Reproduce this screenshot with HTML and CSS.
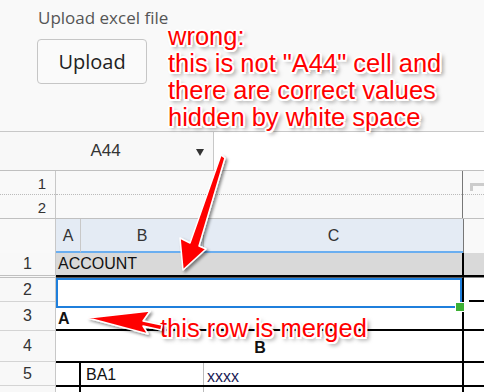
FILE: index.html
```html
<!DOCTYPE html>
<html lang="en">
<head>
    <meta charset="UTF-8">
    <meta name="viewport" content="width=device-width, initial-scale=1.0">
    <title>Upload excel file</title>
    <link rel="stylesheet" href="styles.css">
</head>
<body>
    <div class="top">
        <p class="label">Upload excel file</p>
        <button class="upload">Upload</button>
    </div>

    <div class="namebar">
        <div class="namebox">
            <span class="cell-ref">A44</span>
            <span class="caret"></span>
        </div>
        <div class="formula"></div>
    </div>

    <!-- frozen rows above the sheet -->
    <div class="frozen">
        <div class="frozen-heads">
            <div class="fh">1</div>
            <div class="fh">2</div>
        </div>
        <div class="frozen-body">
            <div class="frow dotted"></div>
            <div class="frow"></div>
        </div>
        <div class="frozen-side"><span class="corner"></span></div>
    </div>

    <div class="colhead">
        <div class="col-corner"></div>
        <div class="col col-a">A</div>
        <div class="col col-b">B</div>
        <div class="col col-c">C</div>
        <div class="col-rest"></div>
    </div>

    <div class="sheet">
        <div class="rowheads">
            <div class="rh rh1">1</div>
            <div class="rh rh2">2</div>
            <div class="rh rh3">3</div>
            <div class="rh rh4">4</div>
            <div class="rh rh5">5</div>
            <div class="rh rh6"></div>
        </div>
        <div class="cells">
            <div class="row r1">
                <div class="main">ACCOUNT</div>
                <div class="ext"></div>
            </div>
            <div class="row r2">
                <div class="main"><div class="selection"><span class="handle"></span></div></div>
                <div class="ext"><span class="ext-line"></span></div>
            </div>
            <div class="row r3">
                <div class="main bold">A</div>
                <div class="ext"></div>
            </div>
            <div class="row r4">
                <div class="main bold center">B</div>
                <div class="ext"></div>
            </div>
            <div class="row r5">
                <div class="main split">
                    <div class="c-a"></div>
                    <div class="c-b">BA1</div>
                    <div class="c-c">xxxx</div>
                </div>
                <div class="ext"></div>
            </div>
            <div class="row r6">
                <div class="main split">
                    <div class="c-a"></div>
                    <div class="c-b"></div>
                    <div class="c-c"></div>
                </div>
                <div class="ext"></div>
            </div>
        </div>
    </div>

    <!-- annotations drawn over the screenshot -->
    <p class="note note-top">wrong:<br>this is not "A44" cell and<br>there are correct values<br>hidden by white space</p>
    <p class="note note-row">this row is merged</p>

    <svg class="arrows" width="484" height="392" viewBox="0 0 484 392">
        <defs>
            <filter id="shade" x="-20%" y="-20%" width="140%" height="140%">
                <feDropShadow dx="2" dy="2" stdDeviation="1.6" flood-color="#000" flood-opacity="0.45"/>
            </filter>
        </defs>
        <path class="arrow" d="M221 155 L225 158 L199 246 L206 249 L183 270 L180 238 L190 243 Z"/>
        <path class="arrow" d="M88 318 L150 311 L143 321 L162 325 L161 330 L143 326 L148 334 Z"/>
    </svg>
</body>
</html>
```

FILE: styles.css
```css
*{
    padding: 0;
    margin: 0;
    box-sizing: border-box;
}
body{
    width: 484px;
    height: 392px;
    overflow: hidden;
    position: relative;
    background: #ffffff;
    font-family: "Liberation Sans", Arial, sans-serif;
    color: #333333;
}
.top{
    height: 132px;
    background: #f9f9f9;
    padding: 6px 0 0 37px;
    border-bottom: 1px solid #c8c8c8;
    font-family: "Open Sans", sans-serif;
}
.label{
    font-size: 17px;
    line-height: 24px;
    color: #555555;
    padding-left: 1px;
}
.upload{
    margin-top: 9px;
    width: 110px;
    height: 45px;
    border: 1px solid #c6c6c6;
    border-radius: 4px;
    background: #fafafa;
    font-family: "Open Sans", sans-serif;
    font-size: 20px;
    color: #222222;
}

/* name box */
.namebar{
    height: 39px;
    display: flex;
    border-bottom: 1px solid #c0c0c0;
}
.namebox{
    width: 214px;
    background: #f8f8f8;
    border-right: 1px solid #c8c8c8;
    display: flex;
    align-items: center;
    justify-content: center;
    position: relative;
}
.cell-ref{
    font-size: 17px;
    color: #333333;
    margin-left: -2px;
}
.caret{
    position: absolute;
    right: 9px;
    top: 17px;
    border-left: 4px solid transparent;
    border-right: 4px solid transparent;
    border-top: 7px solid #333333;
}
.formula{
    flex: 1;
    background: #ffffff;
}

/* frozen rows */
.frozen{
    display: flex;
    height: 48px;
    border-bottom: 1px solid #c0c0c0;
    background: #f9f9f9;
}
.frozen-heads{
    width: 56px;
    border-right: 1px solid #c8c8c8;
}
.fh{
    height: 23px;
    font-size: 15px;
    line-height: 25px;
    text-align: right;
    padding-right: 9px;
    color: #333333;
}
.fh:first-child{
    border-bottom: 1px dotted #bbbbbb;
    height: 24px;
}
.frozen-body{
    width: 407px;
    border-right: 1px solid #777777;
}
.frow{
    height: 23px;
}
.frow.dotted{
    height: 24px;
    border-bottom: 1px dotted #bbbbbb;
}
.frozen-side{
    flex: 1;
    position: relative;
}
.frozen-side::after{
    content: "";
    position: absolute;
    left: 0;
    right: 0;
    top: 23px;
    border-bottom: 1px dotted #bbbbbb;
}
.corner{
    position: absolute;
    left: 7px;
    top: 12px;
    width: 16px;
    height: 8px;
    border-top: 3px solid #cccccc;
    border-left: 3px solid #cccccc;
}

/* column header */
.colhead{
    display: flex;
    height: 34px;
}
.col-corner{
    width: 56px;
    background: #f9f9f9;
    border-right: 1px solid #c8c8c8;
}
.col{
    background: #e4ebf4;
    border-bottom: 2px solid #6aaef0;
    font-size: 16px;
    line-height: 34px;
    text-align: center;
    color: #333333;
}
.col-a{
    width: 25px;
    border-right: 1px solid #c8c8c8;
}
.col-b{
    width: 123px;
    border-right: 1px solid #c8c8c8;
}
.col-c{
    width: 259px;
}
.col-rest{
    flex: 1;
    background: #f9f9f9;
    border-left: 1px solid #777777;
}

/* sheet body */
.sheet{
    display: flex;
}
.rowheads{
    width: 56px;
    background: #f8f8f8;
    border-right: 1px solid #c8c8c8;
}
.rh{
    font-size: 16px;
    text-align: center;
    color: #333333;
    border-bottom: 1px solid #d4d4d4;
    display: flex;
    align-items: center;
    justify-content: center;
}
.rh1{ height: 25px; border-bottom: 3px double #c0c0c0; }
.rh2{ height: 24px; }
.rh3{ height: 29px; }
.rh4{ height: 31px; }
.rh5{ height: 24px; }
.rh6{ height: 20px; border-bottom: none; }

.cells{
    flex: 1;
}
.row{
    display: flex;
}
.main{
    width: 408px;
    border-right: 2px solid #000000;
    font-size: 16px;
    color: #111111;
    padding-left: 2px;
    display: flex;
    align-items: center;
}
.ext{
    flex: 1;
    position: relative;
}
.r1 .main,
.r1 .ext{
    height: 24px;
    background: #d9d9d9;
    border-bottom: 2px solid #000000;
}
.r2 .main{
    height: 31px;
    padding: 0;
    border-top: 1px solid #555555;
}
.r2 .ext{
    border-top: 1px solid #888888;
}
.selection{
    width: 100%;
    height: 100%;
    border: 2px solid #1f7fdc;
    position: relative;
}
.handle{
    position: absolute;
    right: -5px;
    bottom: -6px;
    width: 10px;
    height: 10px;
    background: #3cb034;
    border: 1px solid #ffffff;
}
.ext-line{
    position: absolute;
    left: 5px;
    right: 0;
    top: 22px;
    border-top: 2px solid #000000;
}
.r3 .main,
.r3 .ext{
    height: 23px;
    border-bottom: 2px solid #000000;
}
.r4 .main,
.r4 .ext{
    height: 32px;
    border-bottom: 2px solid #000000;
}
.r5 .main,
.r5 .ext{
    height: 24px;
    border-bottom: 2px solid #000000;
}
.r6 .main,
.r6 .ext{
    height: 20px;
}
.bold{
    font-weight: bold;
    font-size: 16px;
}
.center{
    justify-content: center;
    padding-top: 4px;
}
.split{
    padding: 0;
    align-items: stretch;
}
.c-a{
    width: 25px;
    border-right: 2px solid #000000;
}
.c-b{
    width: 123px;
    border-right: 1px solid #bbbbbb;
    padding: 3px 0 0 5px;
}
.c-c{
    flex: 1;
    padding: 5px 0 0 3px;
    color: #1a1a55;
}

/* red annotations */
.note{
    position: absolute;
    color: #ff0000;
    font-family: "Liberation Sans", Arial, sans-serif;
    font-size: 25.5px;
    line-height: 27px;
    text-shadow:
        -2px 0 0 #ffffff, 2px 0 0 #ffffff, 0 -2px 0 #ffffff, 0 2px 0 #ffffff,
        -1.5px -1.5px 0 #ffffff, 1.5px -1.5px 0 #ffffff,
        -1.5px 1.5px 0 #ffffff, 1.5px 1.5px 0 #ffffff,
        3px 3px 4px rgba(0,0,0,0.55);
    white-space: nowrap;
}
.note-top{
    left: 168px;
    top: 23px;
}
.note-row{
    left: 160px;
    top: 315px;
}
.arrows{
    position: absolute;
    left: 0;
    top: 0;
    pointer-events: none;
}
.arrow{
    fill: #ff0000;
    stroke: #ffffff;
    stroke-width: 1.5;
    stroke-linejoin: round;
    filter: url(#shade);
}
```
